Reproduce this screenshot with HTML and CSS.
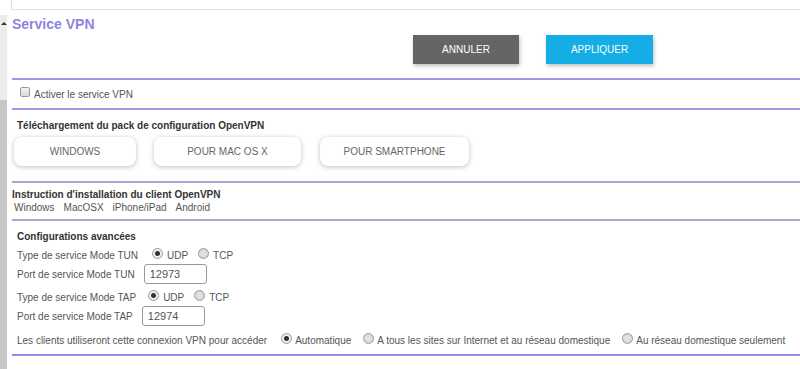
FILE: index.html
```html
<!DOCTYPE html>
<html lang="fr">
<head>
    <meta charset="UTF-8">
    <title>Service VPN</title>
    <link rel="stylesheet" href="styles.css">
</head>
<body>
    <div class="page">
        <div class="sidebar">
            <div class="sidebar-arrow"></div>
            <div class="sidebar-thumb"></div>
        </div>

        <div class="main">
            <div class="topbox"></div>

            <div class="header">
                <h1 class="title">Service VPN</h1>
                <div class="actions">
                    <button class="btn btn-cancel">ANNULER</button>
                    <button class="btn btn-apply">APPLIQUER</button>
                </div>
            </div>

            <div class="section section-enable">
                <label class="check-row"><span class="checkbox"></span>Activer le service VPN</label>
            </div>

            <div class="section section-download">
                <div class="heading">Téléchargement du pack de configuration OpenVPN</div>
                <div class="pack-buttons">
                    <button class="pack-btn pack-win">WINDOWS</button>
                    <button class="pack-btn pack-mac">POUR MAC OS X</button>
                    <button class="pack-btn pack-phone">POUR SMARTPHONE</button>
                </div>
            </div>

            <div class="section section-guide line-soft">
                <div class="heading heading-flush">Instruction d'installation du client OpenVPN</div>
                <div class="links">
                    <a>Windows</a>
                    <a>MacOSX</a>
                    <a>iPhone/iPad</a>
                    <a>Android</a>
                </div>
            </div>

            <div class="section section-advanced line-soft">
                <div class="heading">Configurations avancées</div>

                <div class="row row-tun">
                    <span class="label">Type de service Mode TUN</span>
                    <span class="radio checked"></span><span class="opt">UDP</span>
                    <span class="radio"></span><span class="opt">TCP</span>
                </div>
                <div class="row row-port">
                    <span class="label">Port de service Mode TUN</span>
                    <span class="field">12973</span>
                </div>
                <div class="row row-tap">
                    <span class="label">Type de service Mode TAP</span>
                    <span class="radio checked"></span><span class="opt">UDP</span>
                    <span class="radio"></span><span class="opt">TCP</span>
                </div>
                <div class="row row-port">
                    <span class="label">Port de service Mode TAP</span>
                    <span class="field">12974</span>
                </div>
                <div class="row row-clients">
                    <span class="label">Les clients utiliseront cette connexion VPN pour accéder</span>
                    <span class="radio checked"></span><span class="opt">Automatique</span>
                    <span class="radio"></span><span class="opt">A tous les sites sur Internet et au réseau domestique</span>
                    <span class="radio"></span><span class="opt">Au réseau domestique seulement</span>
                </div>
                <div class="end-rule"></div>
            </div>
        </div>
    </div>
</body>
</html>
```

FILE: styles.css
```css
body {
    margin: 0;
    padding: 0;
    background: #fff;
    font-family: "Liberation Sans", Arial, sans-serif;
    font-size: 10px;
    color: #555;
}

.page {
    display: flex;
    min-height: 369px;
}

.sidebar {
    width: 7px;
    flex-shrink: 0;
    margin-top: 15px;
    background: #ececec;
    display: flex;
    flex-direction: column;
}

.sidebar-arrow {
    height: 0;
    width: 0;
    margin: 7px 0 0 1px;
    border-left: 3px solid transparent;
    border-right: 3px solid transparent;
    border-bottom: 3px solid #333;
}

.sidebar-thumb {
    margin-top: 75px;
    flex: 1;
    background: #c6c6c6;
}

.main {
    flex: 1;
    min-width: 0;
    margin-left: 4px;
}

.topbox {
    height: 9px;
    border-left: 1px solid #ddd;
    border-bottom: 1px solid #e2e2e2;
}

.header {
    padding: 6px 0 0 1px;
    height: 62px;
}

.title {
    margin: 0;
    font-size: 14px;
    line-height: 16px;
    font-weight: bold;
    color: #8d85dc;
}

.actions {
    display: flex;
    gap: 27px;
    margin-top: 3px;
    padding-left: 401px;
}

.btn {
    height: 29px;
    border: none;
    color: #fff;
    font-family: "Liberation Sans", Arial, sans-serif;
    font-size: 10px;
    box-shadow: 1px 2px 4px rgba(0, 0, 0, 0.25);
    padding: 0;
}

.btn-cancel {
    width: 106px;
    background: #656565;
}

.btn-apply {
    width: 107px;
    background: #14ade6;
}

.section {
    border-top: 2px solid #9f98e4;
    margin-left: 1px;
    box-sizing: border-box;
}

.line-soft {
    border-top-color: #aaa7d4;
}

.section-enable {
    height: 30px;
    display: flex;
    align-items: center;
    padding-left: 8px;
}

.check-row {
    display: flex;
    align-items: center;
    gap: 4px;
}

.checkbox {
    width: 8px;
    height: 8px;
    border: 1px solid #999;
    border-radius: 2px;
    background: linear-gradient(#f4f4f4, #d8d8d8);
    margin-top: -4px;
}

.heading {
    font-weight: bold;
    color: #333;
    font-size: 10px;
    padding-left: 5px;
}

.heading-flush {
    padding-left: 0;
}

.section-download {
    height: 73px;
    padding-top: 9px;
}

.section-download .heading {
    line-height: 14px;
}

.pack-buttons {
    display: flex;
    margin-top: 4px;
    padding-left: 2px;
}

.pack-btn {
    height: 29px;
    background: #fff;
    border: none;
    border-radius: 8px;
    box-shadow: 0 1px 5px rgba(0, 0, 0, 0.25);
    color: #666;
    font-family: "Liberation Sans", Arial, sans-serif;
    font-size: 10px;
    padding: 0;
}

.pack-win {
    width: 122px;
}

.pack-mac {
    width: 147px;
    margin-left: 18px;
}

.pack-phone {
    width: 149px;
    margin-left: 19px;
}

.section-guide {
    height: 38px;
    padding-top: 5px;
}

.section-guide .heading {
    line-height: 13px;
}

.links {
    display: flex;
    gap: 9px;
    padding-left: 2px;
    line-height: 14px;
}

.links a {
    color: #555;
}

.section-advanced {
    padding-top: 9px;
}

.section-advanced .heading {
    line-height: 14px;
}

.end-rule {
    margin-top: 4px;
    height: 2px;
    background: #958de3;
}

.row {
    display: flex;
    align-items: center;
    padding-left: 5px;
    white-space: nowrap;
}

.row-tun, .row-tap {
    height: 18px;
    margin-top: 2px;
}

.row-port {
    height: 20px;
}

.row-tap {
    margin-top: 4px;
}

.row-clients {
    height: 20px;
    margin-top: 4px;
}

.label {
    margin-right: 14px;
}

.row-tap .label {
    margin-right: 12px;
}

.row-port .label {
    margin-right: 9px;
}

.row-clients .label {
    margin-right: 14px;
}

.radio {
    width: 9px;
    height: 9px;
    border: 1px solid #9a9a9a;
    border-radius: 50%;
    background: radial-gradient(circle, #e8e8e8, #cfcfcf);
    box-sizing: content-box;
    margin-top: -3px;
}

.radio.checked {
    background: radial-gradient(circle, #333 0 2px, #f2f2f2 3px, #dcdcdc);
}

.opt {
    margin-left: 4px;
    margin-right: 10px;
}

.row-clients .opt {
    margin-left: 3px;
    margin-right: 12px;
}

.field {
    width: 56px;
    height: 18px;
    border: 1px solid #999;
    border-radius: 3px;
    font-size: 11px;
    line-height: 18px;
    padding-left: 5px;
    box-sizing: content-box;
    color: #555;
}
```
